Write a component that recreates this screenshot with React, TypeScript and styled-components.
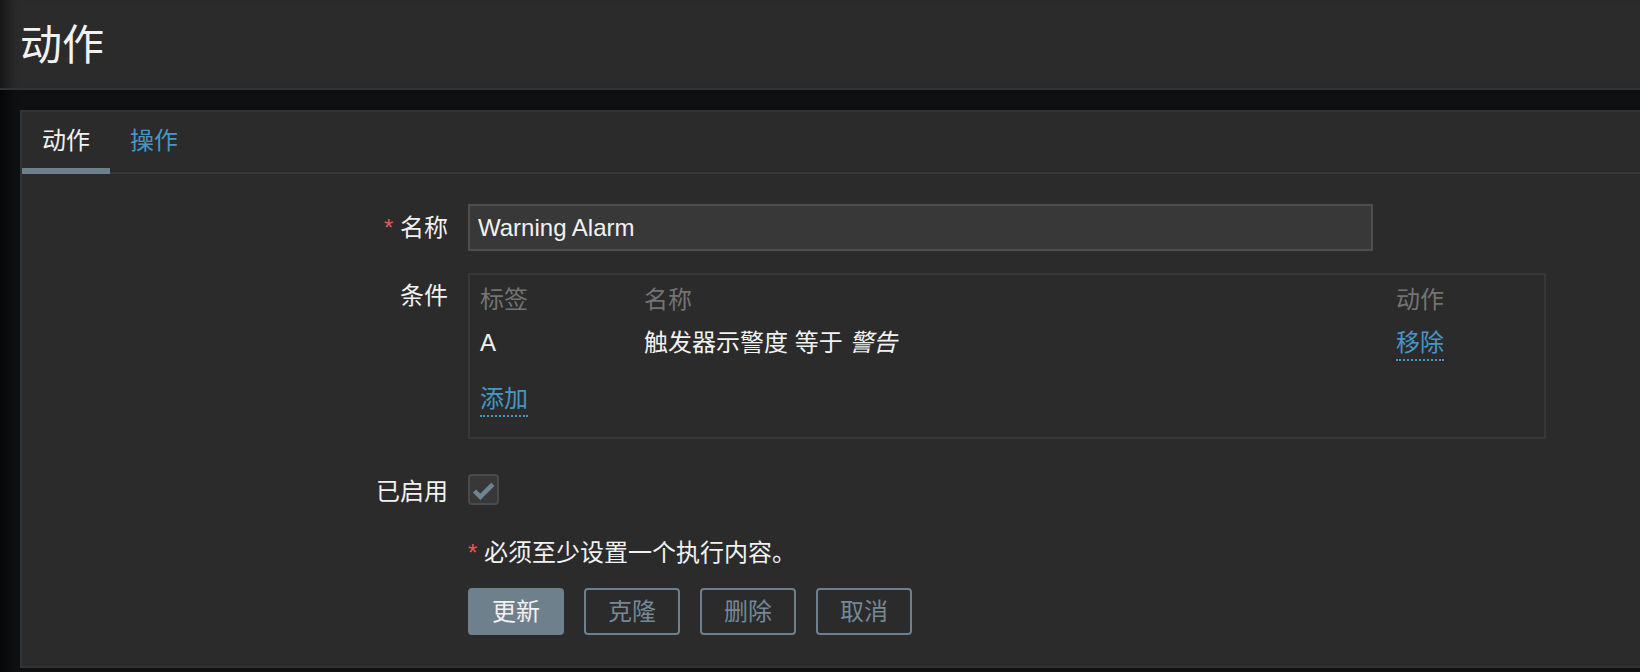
import React from "react";
import styled, { createGlobalStyle } from "styled-components";

const GlobalStyle = createGlobalStyle`
  html, body { margin: 0; padding: 0; background: #0e1012; }
  body {
    font-family: "Liberation Sans", Arial, "Noto Sans CJK SC", sans-serif;
    color: #f2f2f2;
    font-size: 24px;
  }
  * { box-sizing: border-box; }
`;

const Page = styled.div`
  display: flex;
  flex-direction: column;
`;

const Header = styled.header`
  height: 90px;
  background: #2b2b2b;
  border-bottom: 2px solid #333333;
  display: flex;
  align-items: center;
  padding: 3px 0 0 20px;
  box-shadow: inset 18px 0 14px -12px rgba(0, 0, 0, 0.6);
`;

const Title = styled.h1`
  margin: 0;
  font-size: 42px;
  font-weight: 400;
  line-height: 1;
  color: #f2f2f2;
`;

const Main = styled.main`
  padding: 20px 0 5px 20px;
  box-shadow: inset 18px 0 14px -12px rgba(0, 0, 0, 0.7);
`;

const Panel = styled.section`
  background: #2b2b2b;
  border: 2px solid #333333;
  border-right: none;
`;

const TabBar = styled.nav`
  display: flex;
  border-bottom: 2px solid #383838;
`;

const Tab = styled.div<{ $active?: boolean }>`
  padding: 17px 20px 15px;
  line-height: 24px;
  font-size: 24px;
  margin-bottom: -2px;
  border-bottom: 6px solid ${(p) => (p.$active ? "#6e808c" : "transparent")};
  color: ${(p) => (p.$active ? "#f2f2f2" : "#4796c4")};
  cursor: pointer;
`;

const Form = styled.div`
  display: flex;
  flex-direction: column;
  padding: 30px 0 31px 0;
`;

const Row = styled.div<{ $mt?: number; $align?: string }>`
  display: grid;
  grid-template-columns: 426px 1fr;
  column-gap: 20px;
  align-items: ${(p) => p.$align || "center"};
  margin-top: ${(p) => p.$mt || 0}px;
`;

const Label = styled.label<{ $pt?: number }>`
  text-align: right;
  line-height: 24px;
  padding-top: ${(p) => p.$pt || 0}px;
  color: #f2f2f2;
`;

const Req = styled.span`
  color: #e45959;
`;

const TextInput = styled.input`
  width: 905px;
  height: 47px;
  background: #383838;
  border: 2px solid #4f4f4f;
  color: #f2f2f2;
  font: inherit;
  font-size: 24px;
  padding: 0 8px;
  outline: none;
`;

const ConditionsBox = styled.div`
  width: 1078px;
  border: 2px solid #383838;
  padding: 4px 10px 26px;
`;

const Table = styled.table`
  width: 100%;
  border-collapse: collapse;
  table-layout: fixed;
`;

const Th = styled.th`
  text-align: left;
  font-weight: 400;
  color: #737373;
  padding: 9px 0;
  line-height: 24px;
`;

const Td = styled.td`
  padding: 10px 0 8px;
  line-height: 24px;
  color: #f2f2f2;
`;

const Link = styled.span`
  color: #4796c4;
  border-bottom: 2px dotted #4796c4;
  padding-bottom: 3px;
  cursor: pointer;
`;

const AddLine = styled.div`
  margin-top: 24px;
  line-height: 24px;
`;

const Check = styled.span`
  display: inline-flex;
  width: 31px;
  height: 31px;
  border: 2px solid #4a4a4a;
  border-radius: 4px;
  background: #383838;
  align-items: center;
  justify-content: center;
`;

const Message = styled.div`
  line-height: 24px;
`;

const Buttons = styled.div`
  display: flex;
  gap: 20px;
`;

const Button = styled.button<{ $primary?: boolean }>`
  height: 47px;
  padding: 0 22px;
  border: 2px solid #6e808c;
  border-radius: 4px;
  font-family: inherit;
  font-size: 24px;
  line-height: 1;
  background: ${(p) => (p.$primary ? "#6e808c" : "transparent")};
  color: ${(p) => (p.$primary ? "#f2f2f2" : "#768893")};
  cursor: pointer;
`;

export default function App() {
  return (
    <Page>
      <GlobalStyle />
      <Header>
        <Title>动作</Title>
      </Header>
      <Main>
        <Panel>
          <TabBar>
            <Tab $active>动作</Tab>
            <Tab>操作</Tab>
          </TabBar>
          <Form>
            <Row>
              <Label>
                <Req>*</Req> 名称
              </Label>
              <div>
                <TextInput defaultValue="Warning Alarm" />
              </div>
            </Row>
            <Row $mt={22} $align="start">
              <Label $pt={11}>条件</Label>
              <ConditionsBox>
                <Table>
                  <colgroup>
                    <col style={{ width: 164 }} />
                    <col />
                    <col style={{ width: 138 }} />
                  </colgroup>
                  <thead>
                    <tr>
                      <Th>标签</Th>
                      <Th>名称</Th>
                      <Th>动作</Th>
                    </tr>
                  </thead>
                  <tbody>
                    <tr>
                      <Td>A</Td>
                      <Td>
                        触发器示警度 等于 <em>警告</em>
                      </Td>
                      <Td>
                        <Link>移除</Link>
                      </Td>
                    </tr>
                  </tbody>
                </Table>
                <AddLine>
                  <Link>添加</Link>
                </AddLine>
              </ConditionsBox>
            </Row>
            <Row $mt={35}>
              <Label>已启用</Label>
              <div>
                <Check>
                  <svg width="27" height="27" viewBox="2 2 27 27">
                    <path
                      d="M6.5 17 L12.3 22.8 L24.8 10.3"
                      fill="none"
                      stroke="#6f8592"
                      strokeWidth="4.5"
                    />
                  </svg>
                </Check>
              </div>
            </Row>
            <Row $mt={32}>
              <Label />
              <Message>
                <Req>*</Req> 必须至少设置一个执行内容。
              </Message>
            </Row>
            <Row $mt={23}>
              <Label />
              <Buttons>
                <Button $primary>更新</Button>
                <Button>克隆</Button>
                <Button>删除</Button>
                <Button>取消</Button>
              </Buttons>
            </Row>
          </Form>
        </Panel>
      </Main>
    </Page>
  );
}
